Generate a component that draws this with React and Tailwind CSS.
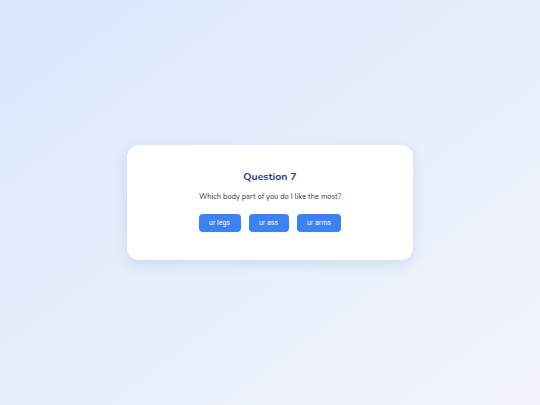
import React from "react";

const answers = ["ur legs", "ur ass", "ur arms"];

export default function App() {
  return (
    <div className="flex h-[405px] w-[540px] items-center justify-center bg-gradient-to-br from-[#dbe7fd] to-[#f2f5fb]">
      <div className="w-[286px] rounded-xl bg-white pt-[25px] pb-[28px] text-center shadow-[0_4px_14px_rgba(60,90,150,0.14)]">
        <h1 className="font-['Nunito','Lato',sans-serif] text-[10.5px] font-bold leading-[14px] text-[#25408f]">
          Question 7
        </h1>
        <p className="mt-[8px] font-['Nunito','Lato',sans-serif] text-[7.5px] leading-[10px] text-[#374151]">
          Which body part of you do I like the most?
        </p>
        <div className="mt-[12px] flex justify-center gap-2">
          {answers.map((a) => (
            <button
              key={a}
              className="h-[18px] rounded-[4px] bg-[#3b82f6] px-[10.5px] font-['Roboto',sans-serif] text-[7px] text-white"
            >
              {a}
            </button>
          ))}
        </div>
      </div>
    </div>
  );
}
